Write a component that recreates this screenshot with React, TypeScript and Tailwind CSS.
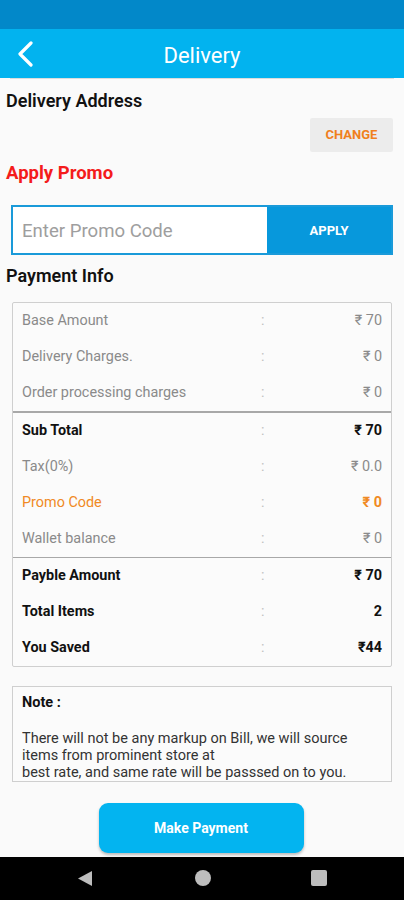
import React from "react";

type Row = { label: string; value: string; kind: "muted" | "bold" | "promo" };

const group1: Row[] = [
  { label: "Base Amount", value: "₹ 70", kind: "muted" },
  { label: "Delivery Charges.", value: "₹ 0", kind: "muted" },
  { label: "Order processing charges", value: "₹ 0", kind: "muted" },
];
const group2: Row[] = [
  { label: "Sub Total", value: "₹ 70", kind: "bold" },
  { label: "Tax(0%)", value: "₹ 0.0", kind: "muted" },
  { label: "Promo Code", value: "₹ 0", kind: "promo" },
  { label: "Wallet balance", value: "₹ 0", kind: "muted" },
];
const group3: Row[] = [
  { label: "Payble Amount", value: "₹ 70", kind: "bold" },
  { label: "Total Items", value: "2", kind: "bold" },
  { label: "You Saved", value: "₹44", kind: "bold" },
];

function InfoRow({ r }: { r: Row }) {
  const labelCls =
    r.kind === "bold"
      ? "text-[#111] font-bold"
      : r.kind === "promo"
      ? "text-[#f08a24]"
      : "text-[#8a8a8a]";
  const valueCls =
    r.kind === "bold"
      ? "text-[#111] font-bold"
      : r.kind === "promo"
      ? "text-[#f08a24] font-bold"
      : "text-[#8a8a8a]";
  return (
    <div className="flex h-[36px] items-center pl-[9px] pr-[9px] text-[14.4px]">
      <div className={`w-[239px] ${labelCls}`}>{r.label}</div>
      <div className="text-[#c0c0c0]">:</div>
      <div className={`flex-1 text-right ${valueCls}`}>{r.value}</div>
    </div>
  );
}

export default function App() {
  return (
    <div
      className="relative flex h-[900px] w-[404px] flex-col overflow-hidden bg-[#fafafa]"
      style={{ fontFamily: "Roboto, 'Noto Sans', sans-serif" }}
    >
      {/* status bar */}
      <div className="h-[29px] shrink-0 bg-[#0288c9]" />
      {/* toolbar */}
      <div className="relative flex h-[49px] shrink-0 items-center justify-center bg-[#02b3ef] pt-[3px]">
        <svg
          className="absolute left-[14px] top-[12px]"
          width="24"
          height="26"
          viewBox="0 0 24 26"
          fill="none"
        >
          <path d="M17 2 L6 13 L17 24" stroke="white" strokeWidth="3.2" strokeLinecap="round" strokeLinejoin="round" />
        </svg>
        <span className="text-[22px] text-white">Delivery</span>
      </div>
      <div className="mx-[10px] h-px shrink-0 bg-[#dcdcdc]" />

      {/* Delivery Address */}
      <div className="mt-[11px] pl-[6px] text-[18px] font-semibold leading-[22px] text-[#111]">
        Delivery Address
      </div>
      <div className="mt-[6px] flex justify-end pr-[11px]">
        <div className="flex h-[34px] w-[83px] items-center justify-center rounded-[2px] bg-[#ececec] text-[13px] font-bold text-[#f0801c]">
          CHANGE
        </div>
      </div>

      {/* Apply promo */}
      <div className="mt-[10px] pl-[6px] text-[18.5px] font-bold leading-[22px] text-[#f41c1c]">
        Apply Promo
      </div>
      <div className="mx-[11px] mt-[21px] flex h-[50px] border-2 border-[#1a9ad9]">
        <div className="flex w-[254px] items-center bg-white pl-[9px] pt-[3px] text-[18.6px] text-[#9e9e9e]">
          Enter Promo Code
        </div>
        <div className="flex flex-1 items-center justify-center bg-[#0798dc] pt-[2px] text-[13px] font-bold text-white">
          APPLY
        </div>
      </div>

      {/* Payment Info */}
      <div className="mt-[10px] pl-[6px] text-[18px] font-semibold leading-[22px] text-[#111]">
        Payment Info
      </div>

      <div className="mx-[12px] mt-[15px] rounded-[2px] border border-[#cfcfcf] bg-[#fbfbfb]">
        {group1.map((r) => (
          <InfoRow key={r.label} r={r} />
        ))}
        <div className="h-[1.5px] bg-[#a8a8a8]" />
        {group2.map((r) => (
          <InfoRow key={r.label} r={r} />
        ))}
        <div className="h-[1.5px] bg-[#a8a8a8]" />
        {group3.map((r) => (
          <InfoRow key={r.label} r={r} />
        ))}
      </div>

      {/* Note */}
      <div className="mx-[12px] mt-[19px] h-[96px] overflow-hidden border border-[#cfcfcf] bg-[#fbfbfb] pl-[9px] pr-[6px] pt-[7px] text-[14.5px] text-[#333]">
        <div className="font-bold leading-[17px] text-[#111]">Note :</div>
        <div className="mt-[19px] leading-[17px]">
          There will not be any markup on Bill, we will source
          <br />
          items from prominent store at
          <br />
          best rate, and same rate will be passsed on to you.
        </div>
      </div>

      {/* Make payment */}
      <div className="mt-[21px] flex justify-center pr-[2px]">
        <div className="flex h-[50px] w-[205px] items-center justify-center rounded-[9px] bg-[#03b4f0] text-[14px] font-bold text-white shadow-[0_2px_3px_rgba(0,0,0,0.25)]">
          Make Payment
        </div>
      </div>

      {/* nav bar */}
      <div className="absolute bottom-0 left-0 flex h-[43px] w-[404px] items-center bg-black">
        <div className="flex w-full items-center">
          <svg className="absolute left-[77px] top-[13px]" width="16" height="17" viewBox="0 0 16 17">
            <path d="M15 1 L15 16 L1 8.5 Z" fill="#bdbdbd" />
          </svg>
          <div className="absolute left-[195px] top-[13px] h-[16px] w-[16px] rounded-full bg-[#bdbdbd]" />
          <div className="absolute left-[311px] top-[13px] h-[16px] w-[16px] rounded-[2px] bg-[#bdbdbd]" />
        </div>
      </div>
    </div>
  );
}
